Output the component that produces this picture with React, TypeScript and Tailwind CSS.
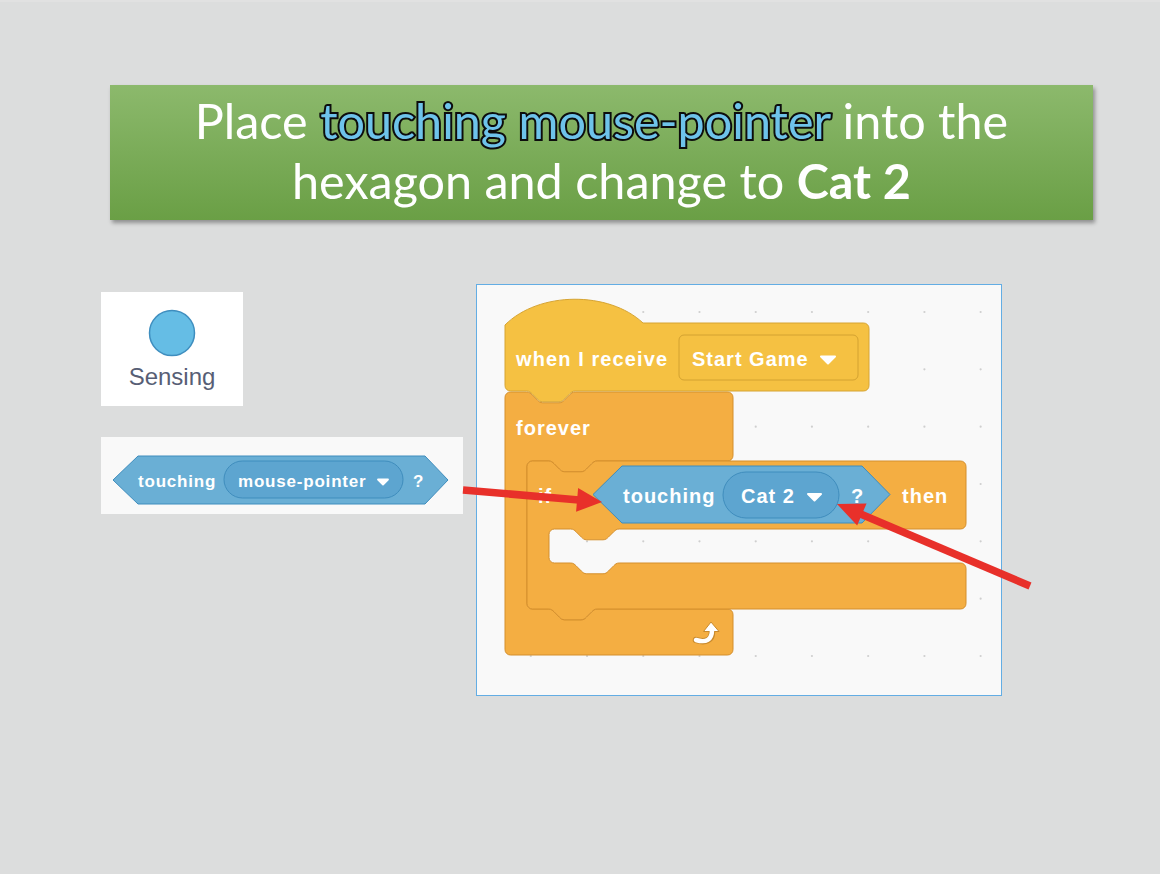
import React from "react";

const NR =
  "c 2.7,0 4.05,1.35 5.4,2.7 l 5.4,5.4 c 1.35,1.35 2.7,2.7 5.4,2.7 h 16.2 c 2.7,0 4.05,-1.35 5.4,-2.7 l 5.4,-5.4 c 1.35,-1.35 2.7,-2.7 5.4,-2.7";
const NL =
  "c -2.7,0 -4.05,1.35 -5.4,2.7 l -5.4,5.4 c -1.35,1.35 -2.7,2.7 -5.4,2.7 h -16.2 c -2.7,0 -4.05,-1.35 -5.4,-2.7 l -5.4,-5.4 c -1.35,-1.35 -2.7,-2.7 -5.4,-2.7";
const r = 5.4;
const NO = 21.6;
const NW = 48.6;

function cPath(
  L: number,
  T: number,
  R: number,
  armB: number,
  inL: number,
  mouthB: number,
  B: number,
  bottomTab: boolean
) {
  return [
    `M ${L},${T + r}`,
    `a ${r},${r} 0 0 1 ${r},${-r}`,
    `H ${L + NO}`,
    NR,
    `H ${R - r}`,
    `a ${r},${r} 0 0 1 ${r},${r}`,
    `V ${armB - r}`,
    `a ${r},${r} 0 0 1 ${-r},${r}`,
    `H ${inL + NO + NW}`,
    NL,
    `H ${inL + r}`,
    `a ${r},${r} 0 0 0 ${-r},${r}`,
    `V ${mouthB - r}`,
    `a ${r},${r} 0 0 0 ${r},${r}`,
    `H ${inL + NO}`,
    NR,
    `H ${R - r}`,
    `a ${r},${r} 0 0 1 ${r},${r}`,
    `V ${B - r}`,
    `a ${r},${r} 0 0 1 ${-r},${r}`,
    bottomTab ? `H ${L + NO + NW} ${NL}` : "",
    `H ${L + r}`,
    `a ${r},${r} 0 0 1 ${-r},${-r}`,
    "Z",
  ].join(" ");
}

function hatPath(L: number, T: number, R: number, B: number) {
  return [
    `M ${L},${T + 2}`,
    "c 34,-34 104,-34 138,-2",
    `H ${R - r}`,
    `a ${r},${r} 0 0 1 ${r},${r}`,
    `V ${B - r}`,
    `a ${r},${r} 0 0 1 ${-r},${r}`,
    `H ${L + NO + NW}`,
    NL,
    `H ${L + r}`,
    `a ${r},${r} 0 0 1 ${-r},${-r}`,
    "Z",
  ].join(" ");
}

const BF = "'Liberation Sans', Arial, sans-serif";

function Arrow({
  x1,
  y1,
  x2,
  y2,
  len,
  half,
}: {
  x1: number;
  y1: number;
  x2: number;
  y2: number;
  len: number;
  half: number;
}) {
  const dx = x2 - x1;
  const dy = y2 - y1;
  const d = Math.hypot(dx, dy);
  const ux = dx / d;
  const uy = dy / d;
  const bx = x2 - ux * len;
  const by = y2 - uy * len;
  const px = -uy;
  const py = ux;
  const pts = `${x2},${y2} ${bx + px * half},${by + py * half} ${bx - px * half},${by - py * half}`;
  return (
    <g>
      <line x1={x1} y1={y1} x2={bx + ux * 2} y2={by + uy * 2} stroke="#e8302a" strokeWidth={7.5} />
      <polygon points={pts} fill="#e8302a" />
    </g>
  );
}

function Workspace() {
  const dotsX: number[] = [];
  const dotsY: number[] = [];
  for (let i = 0; i < 9; i++) dotsX.push(53.8 + i * 56.23);
  for (let j = 0; j < 7; j++) dotsY.push(27 + j * 57.33);
  return (
    <svg width="524" height="410" viewBox="0 0 524 410" className="block">
      {dotsX.map((x) =>
        dotsY.map((y) => <circle key={`${x}-${y}`} cx={x} cy={y} r={1.1} fill="#cfcfcf" />)
      )}
      {/* forever */}
      <path d={cPath(28, 107, 256, 176, 50, 324, 370, false)} fill="#f4ae42" stroke="#d48f2d" strokeWidth={1} />
      {/* hat */}
      <path d={hatPath(28, 38, 392, 106)} fill="#f5c142" stroke="#d6a433" strokeWidth={1} />
      {/* if */}
      <path d={cPath(50, 176, 489, 244, 72, 278, 324, true)} fill="#f4ae42" stroke="#d48f2d" strokeWidth={1} />
      {/* hat field */}
      <rect x={202} y={50} width={179} height={45} rx={5} fill="#f5c142" stroke="#d3a231" strokeWidth={1} />
      <g fontFamily={BF} fontWeight={700} fontSize={20} fill="#ffffff">
        <text x={39} y={81} letterSpacing={1.1}>when I receive</text>
        <text x={215} y={81} letterSpacing={1}>Start Game</text>
        <text x={39} y={150} letterSpacing={1}>forever</text>
        <text x={61} y={218} letterSpacing={1}>if</text>
        <text x={425} y={218} letterSpacing={1}>then</text>
      </g>
      <polygon points="344,71.5 358,71.5 351,78.5" fill="#fff" stroke="#fff" strokeWidth={2} strokeLinejoin="round" />
      {/* boolean */}
      <path d="M 116,209.5 L 145,181 H 385 L 413,209.5 L 385,238 H 145 Z" fill="#6aafd5" stroke="#3f8dbd" strokeWidth={1} />
      <rect x={246} y={187} width={116} height={46} rx={23} fill="#5da5d0" stroke="#3f8dbd" strokeWidth={1} />
      <g fontFamily={BF} fontWeight={700} fontSize={20} fill="#ffffff">
        <text x={146} y={218} letterSpacing={1}>touching</text>
        <text x={264} y={218} letterSpacing={1}>Cat 2</text>
        <text x={374} y={218}>?</text>
      </g>
      <polygon points="331,209 344,209 337.5,215.5" fill="#fff" stroke="#fff" strokeWidth={2} strokeLinejoin="round" />
      {/* loop icon */}
      <path d="M 235,347 C 235,355 229,358 219,355" fill="none" stroke="#c98a2c" strokeWidth={6.5} strokeLinecap="round" />
      <polygon points="234,337 226.5,346.5 242,346.5" fill="#fff" stroke="#c98a2c" strokeWidth={1} strokeLinejoin="round" />
      <path d="M 235,345 C 235,355 229,358 219,355" fill="none" stroke="#ffffff" strokeWidth={4.5} strokeLinecap="round" />
    </svg>
  );
}

export default function App() {
  return (
    <div className="relative w-[1160px] h-[874px] overflow-hidden bg-[#dcdddd] border-t-2 border-[#e1e1e1]">
      <div className="pt-[83px] pl-[110px]">
        <div
          className="w-[983px] h-[135px] pb-[6px] flex flex-col items-center justify-center bg-gradient-to-b from-[#8cb96c] to-[#6a9f45] shadow-[2px_3px_4px_rgba(0,0,0,0.35)] text-white text-[48.5px] leading-[60px]"
          style={{ fontFamily: "Lato, 'Open Sans', sans-serif" }}
        >
          <div>
            Place{" "}
            <span className="text-[#6ec3ea] [-webkit-text-stroke:4px_#0d0d0d] [paint-order:stroke_fill]">
              touching mouse-pointer
            </span>{" "}
            into the
          </div>
          <div>
            hexagon and change to <span className="font-bold">Cat 2</span>
          </div>
        </div>
      </div>

      <div className="flex mt-[64px]">
        <div className="ml-[101px] mt-[8px] w-[362px] flex flex-col">
          <div className="w-[142px] h-[114px] bg-white flex flex-col items-center">
            <svg width="50" height="50" viewBox="0 0 50 50" className="mt-[16px]">
              <circle cx="25" cy="25" r="22.5" fill="#65bde5" stroke="#3e8ebf" strokeWidth="1.5" />
            </svg>
            <div
              className="text-[24px] leading-none text-[#575e75] mt-[7px]"
              style={{ fontFamily: "'Liberation Sans', Arial, sans-serif" }}
            >
              Sensing
            </div>
          </div>
          <div className="mt-[31px] w-[362px] h-[77px] bg-[#f9f9f9]">
            <svg width="362" height="77" viewBox="0 0 362 77" className="block">
              <path d="M 12,43 L 37,19 H 324 L 347,43 L 324,67 H 37 Z" fill="#6aafd5" stroke="#3f8dbd" strokeWidth={1} />
              <rect x={123} y={24} width={179} height={37} rx={18.5} fill="#5da5d0" stroke="#3f8dbd" strokeWidth={1} />
              <g fontFamily={BF} fontWeight={700} fontSize={17} fill="#ffffff">
                <text x={37} y={50} letterSpacing={0.8}>touching</text>
                <text x={137} y={50} letterSpacing={0.8}>mouse-pointer</text>
                <text x={312} y={50}>?</text>
              </g>
              <polygon points="277,42.5 287,42.5 282,47.5" fill="#fff" stroke="#fff" strokeWidth={1.8} strokeLinejoin="round" />
            </svg>
          </div>
        </div>
        <div className="ml-[13px] w-[526px] h-[412px] bg-[#f9f9f9] border border-[#63ade4]">
          <Workspace />
        </div>
      </div>

      <svg className="absolute left-0 top-0 pointer-events-none" width="1160" height="874" viewBox="0 0 1160 874">
        <Arrow x1={463} y1={488} x2={602} y2={500} len={25} half={12} />
        <Arrow x1={1030} y1={584} x2={837} y2={502} len={27} half={12} />
      </svg>
    </div>
  );
}
